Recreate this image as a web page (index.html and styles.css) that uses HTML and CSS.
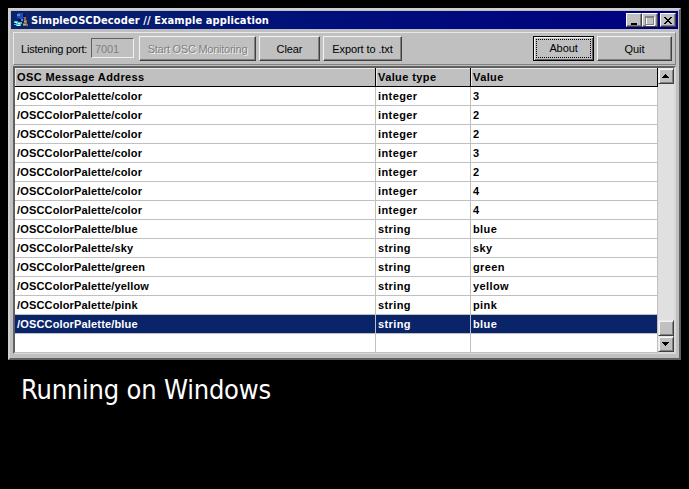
FILE: index.html
```html
<!DOCTYPE html>
<html lang="en">
<head>
<meta charset="utf-8">
<title>SimpleOSCDecoder</title>
<link rel="stylesheet" href="styles.css">
</head>
<body>
<main class="window">
  <header class="titlebar">
    <svg class="app-icon" width="16" height="16" viewBox="0 0 16 16" shape-rendering="crispEdges">
      <path fill="#1c49c8" d="M5 1h5v1h2v4h-2v2H6V6H4V3h1z"/>
      <path fill="#5f86d8" d="M4 2h3v2H4zM8 7h2v2H8z"/>
      <path fill="#10151c" d="M10 2h2v3h-2zM5 7h3v2H5z"/>
      <path fill="#8c6b50" d="M11 5h2v3h1v4h1v2h-5v-3h1z"/>
      <path fill="#c0ad8f" d="M11 9h2v1h-2zM10 12h3v1h-3z"/>
      <path fill="#38c4dc" d="M1 9h4v1h4v2h-1v2H3v-1H1v-1h2v-1H1z"/>
      <path fill="#e8f4f4" d="M2 10h2v1H2zM5 11h2v1H5zM4 13h3v1H4z"/>
    </svg>
    <h1 class="title">SimpleOSCDecoder // Example application</h1>
    <div class="controls">
      <button class="ctl" aria-label="Minimize"><svg width="12" height="10" shape-rendering="crispEdges"><path d="M3 7h6v2H3z"/></svg></button>
      <button class="ctl" aria-label="Maximize"><svg width="12" height="10" shape-rendering="crispEdges"><path fill="none" stroke="#fff" d="M2.500 1.500h8v8h-8z"/><path fill="none" stroke="#808080" d="M1.500 .5h8v8h-8zM2 1.500h7"/></svg></button>
      <button class="ctl close" aria-label="Close"><svg width="12" height="10" shape-rendering="crispEdges"><path d="M2 1h2v1h1v1h2V2h1V1h2v1H9v1H8v1H7v1h1v1h1v1h1v1H8V7H7V6H5v1H4v1H2V7h1V6h1V5h1V4H4V3H3V2H2z"/></svg></button>
    </div>
  </header>
  <section class="toolbar">
    <label class="port-label"><span>Listening port:</span></label>
    <div class="field">7001</div>
    <button class="btn start disabled"><span>Start OSC Monitoring</span></button>
    <button class="btn clear"><span>Clear</span></button>
    <button class="btn export"><span>Export to .txt</span></button>
    <button class="btn about"><span>About</span></button>
    <button class="btn quit"><span>Quit</span></button>
  </section>
  <section class="grid-frame">
    <div class="grid">
      <div class="row head"><span>OSC Message Address</span><span>Value type</span><span>Value</span></div>
      <div class="row"><span>/OSCColorPalette/color</span><span>integer</span><span>3</span></div>
      <div class="row"><span>/OSCColorPalette/color</span><span>integer</span><span>2</span></div>
      <div class="row"><span>/OSCColorPalette/color</span><span>integer</span><span>2</span></div>
      <div class="row"><span>/OSCColorPalette/color</span><span>integer</span><span>3</span></div>
      <div class="row"><span>/OSCColorPalette/color</span><span>integer</span><span>2</span></div>
      <div class="row"><span>/OSCColorPalette/color</span><span>integer</span><span>4</span></div>
      <div class="row"><span>/OSCColorPalette/color</span><span>integer</span><span>4</span></div>
      <div class="row"><span>/OSCColorPalette/blue</span><span>string</span><span>blue</span></div>
      <div class="row"><span>/OSCColorPalette/sky</span><span>string</span><span>sky</span></div>
      <div class="row"><span>/OSCColorPalette/green</span><span>string</span><span>green</span></div>
      <div class="row"><span>/OSCColorPalette/yellow</span><span>string</span><span>yellow</span></div>
      <div class="row"><span>/OSCColorPalette/pink</span><span>string</span><span>pink</span></div>
      <div class="row selected"><span>/OSCColorPalette/blue</span><span>string</span><span>blue</span></div>
      <div class="row"><span></span><span></span><span></span></div>
    </div>
    <div class="scrollbar">
      <div class="sb"><svg width="12" height="12" shape-rendering="crispEdges"><path d="M5 4h1v1h1v1h1v1h1v1H2V7h1V6h1V5h1z"/></svg></div>
      <div class="track"></div>
      <div class="sb"></div>
      <div class="sb"><svg width="12" height="12" shape-rendering="crispEdges"><path d="M2 4h7v1H8v1H7v1H6v1H5V7H4V6H3V5H2z"/></svg></div>
    </div>
  </section>
</main>
<p class="caption">Running on Windows</p>
</body>
</html>
```
FILE: styles.css
```css
* { box-sizing: border-box; }
body {
  margin: 0;
  padding: 8px;
  height: 489px;
  overflow: hidden;
  background: #000;
  font-family: "Liberation Sans", Arial, sans-serif;
  color: #000;
}
.window {
  width: 673px;
  height: 352px;
  padding: 1px;
  background: #c0c0c0;
  border: 2px solid;
  border-color: #d0d0d0 #606060 #606060 #d0d0d0;
}
.titlebar {
  display: flex;
  align-items: center;
  height: 18px;
  padding: 0 2px;
  background: linear-gradient(90deg, #0a246a, #00107a 45%, #000080);
}
.app-icon { flex: none; }
.title {
  margin: 1px 0 0 2px;
  font: bold 11px/17px "DejaVu Sans Condensed", Tahoma, sans-serif;
  letter-spacing: 0.1px;
  color: #fff;
  white-space: nowrap;
}
.controls { display: flex; margin-left: auto; }
.ctl {
  width: 16px;
  height: 14px;
  padding: 0;
  line-height: 0;
  background: #c0c0c0;
  border: 1px solid;
  border-color: #fff #404040 #404040 #fff;
  box-shadow: inset -1px -1px #808080;
}
.ctl svg { display: block; margin: 1px 0 0 1px; }
.close { margin-left: 2px; }
.toolbar {
  display: flex;
  margin: 3px 2px 0;
  height: 33px;
  padding: 3px 3px 0 7px;
  border: 1px solid;
  border-color: #e8e8e8 #808080 #808080 #e8e8e8;
  font-size: 11px;
}
.port-label { width: 70px; line-height: 26px; letter-spacing: -0.2px; white-space: nowrap; }
.field {
  width: 43px;
  height: 20px;
  margin: 2px 5px 0 0;
  padding: 1px 0 0 3px;
  line-height: 18px;
  font-size: 11px;
  letter-spacing: -0.1px;
  color: #808080;
  border: 1px solid;
  border-color: #606060 #f0f0f0 #f0f0f0 #606060;
}
.btn {
  height: 25px;
  padding: 0;
  margin-right: 3px;
  background: #c0c0c0;
  border: 1px solid;
  border-color: #f4f4f4 #404040 #404040 #f4f4f4;
  box-shadow: inset -1px -1px #808080;
  font: 11px/22px "Liberation Sans", Arial, sans-serif;
  letter-spacing: -0.1px;
  color: #000;
  white-space: nowrap;
}
.start { width: 117px; letter-spacing: -0.25px; }
.disabled { color: #808080; text-shadow: 1px 1px #f0f0f0; }
.clear { width: 61px; }
.export { width: 79px; }
.about {
  width: 61px;
  margin-left: auto;
  border-color: #000;
  box-shadow: inset 1px 1px #f4f4f4, inset -1px -1px #606060;
  padding: 3px;
  line-height: 15px;
}
.about span { display: block; outline: 1px dotted #000; height: 17px; line-height: 17px; }
.quit { width: 75px; margin-right: 0; }
.grid-frame {
  display: flex;
  margin: 1px 2px 0;
  width: 663px;
  height: 288px;
  border: 2px solid;
  border-color: #606060 #d8d8d8 #d8d8d8 #606060;
  background: #fff;
}
.grid { width: 643px; flex: none; }
.row {
  display: grid;
  grid-template-columns: 361px 95px 187px;
  height: 19px;
  font: bold 11px/18px "Liberation Sans", Arial, sans-serif;
  letter-spacing: 0.4px;
}
.row span {
  padding-left: 2px;
  border-right: 1px solid #c0c0c0;
  border-bottom: 1px solid #c0c0c0;
  white-space: nowrap;
}
.row span:first-child { letter-spacing: 0.16px; }
.row.head span {
  letter-spacing: 0.4px;
  background: #c0c0c0;
  border-color: #000;
  box-shadow: inset 1px 1px #e8e8e8;
}
.row.selected span { background: #0a246a; color: #fff; }
.scrollbar { display: flex; flex-direction: column; width: 16px; background: #e0e0e0; }
.track { flex: 1; }
.sb {
  height: 16px;
  padding: 1px;
  background: #c0c0c0;
  border: 1px solid;
  border-color: #e8e8e8 #404040 #404040 #e8e8e8;
  box-shadow: inset 1px 1px #f4f4f4, inset -1px -1px #808080;
}
.sb svg { display: block; }
.caption {
  margin: 14px 0 0 13px;
  font: 27px/32px "DejaVu Sans Condensed", Tahoma, sans-serif;
  letter-spacing: -0.2px;
  color: #fff;
  white-space: nowrap;
}
```
